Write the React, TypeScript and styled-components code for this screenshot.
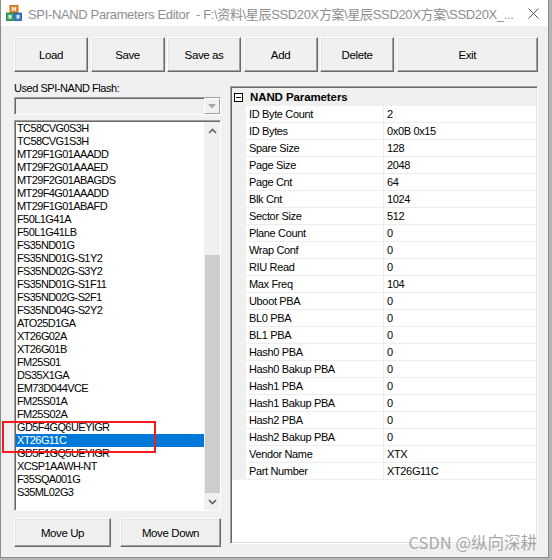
import React from "react";
import styled, { createGlobalStyle } from "styled-components";

const GlobalStyle = createGlobalStyle`
  html, body { margin: 0; padding: 0; }
  body { background: #b4b4b4; font-family: "Liberation Sans", Arial, sans-serif; }
  #root { width: 552px; height: 560px; }
`;

const Desktop = styled.div`
  position: relative;
  width: 552px;
  height: 560px;
  overflow: hidden;
  background: #b4b4b4;
`;

const Window = styled.div`
  width: 549px;
  height: 558px;
  box-sizing: border-box;
  border: 1px solid #8c8c8c;
  border-top: none;
  background: #f0f0f0;
  display: flex;
  flex-direction: column;
`;

const TitleBar = styled.div`
  height: 26px;
  flex: none;
  background: #ffffff;
  display: flex;
  align-items: center;
  padding: 0 9px 0 5px;
`;

const TitleText = styled.div`
  flex: 1;
  min-width: 0;
  margin-left: 6px;
  font-family: "Liberation Sans", "Noto Sans CJK SC", sans-serif;
  font-size: 13px;
  letter-spacing: -0.35px;
  color: #8e8e8e;
  white-space: pre;
  overflow: hidden;
`;

const Content = styled.div`
  flex: 1;
  display: flex;
  flex-direction: column;
  padding: 11px 10px 0 13px;
`;

const Toolbar = styled.div`
  display: flex;
  gap: 2.5px;
  height: 35px;
`;

const Button = styled.button<{ $w?: number }>`
  ${(p) => (p.$w ? `width: ${p.$w}px; flex: none;` : "flex: 1;")}
  height: 100%;
  box-sizing: border-box;
  margin: 0;
  padding: 0;
  background: #f0f0f0;
  border: 1px solid;
  border-color: #ffffff #696969 #696969 #ffffff;
  box-shadow: inset -1px -1px 0 #a0a0a0, inset 1px 1px 0 #e3e3e3;
  font-family: "Liberation Sans", Arial, sans-serif;
  font-size: 11.5px;
  letter-spacing: -0.4px;
  color: #000;
`;

const Body = styled.div`
  display: flex;
  gap: 9px;
  margin-top: 9px;
`;

const LeftColumn = styled.div`
  width: 207px;
  flex: none;
  display: flex;
  flex-direction: column;
`;

const Label = styled.div`
  height: 14px;
  line-height: 14px;
  font-size: 11px;
  letter-spacing: -0.45px;
  color: #000;
`;

const Combo = styled.div`
  margin-top: 2px;
  height: 18px;
  box-sizing: border-box;
  border: 1px solid;
  border-color: #a0a0a0 #ffffff #ffffff #a0a0a0;
  box-shadow: inset 1px 1px 0 #696969;
  background: #f0f0f0;
  display: flex;
  justify-content: flex-end;
`;

const ComboArrow = styled.div`
  width: 16px;
  box-sizing: border-box;
  border: 1px solid;
  border-color: #ffffff #a0a0a0 #a0a0a0 #ffffff;
  display: flex;
  align-items: center;
  justify-content: center;
`;

const ListBox = styled.div`
  margin-top: 5px;
  height: 391px;
  box-sizing: border-box;
  border-style: solid;
  border-width: 1px;
  border-color: #a0a0a0 #ffffff #ffffff #a0a0a0;
  box-shadow: inset 1px 1px 0 #696969;
  padding: 1px 0 0 1px;
  background: #ffffff;
  display: flex;
`;

const Items = styled.div`
  flex: 1;
  display: flex;
  flex-direction: column;
`;

const Item = styled.div<{ $selected?: boolean }>`
  height: 13px;
  line-height: 13px;
  padding-left: 1px;
  font-size: 11px;
  letter-spacing: -0.6px;
  white-space: nowrap;
  color: ${(p) => (p.$selected ? "#ffffff" : "#000000")};
  background: ${(p) => (p.$selected ? "#0078d7" : "transparent")};
`;

const ScrollBar = styled.div`
  width: 16px;
  flex: none;
  display: flex;
  flex-direction: column;
  background: #f0f0f0;
`;

const ScrollArrow = styled.div`
  height: 17px;
  display: flex;
  align-items: center;
  justify-content: center;
`;

const ScrollTrack = styled.div`
  flex: 1;
  display: flex;
  flex-direction: column;
  justify-content: flex-end;
  align-items: center;
`;

const Thumb = styled.div`
  width: 15px;
  height: 238px;
  background: #cdcdcd;
`;

const BottomButtons = styled.div`
  margin-top: 7px;
  height: 29px;
  display: flex;
  gap: 9px;
`;

const Panel = styled.div`
  flex: 1;
  margin-top: 5px;
  height: 458px;
  box-sizing: border-box;
  border: 1px solid;
  border-color: #a0a0a0 #ffffff #ffffff #a0a0a0;
  box-shadow: inset 1px 1px 0 #696969, inset -1px -1px 0 #e3e3e3;
  padding: 1px 1px 1px 1px;
  background: #ffffff;
  display: flex;
  flex-direction: column;
`;

const Header = styled.div`
  height: 18px;
  flex: none;
  background: #f0f0f0;
  display: flex;
  align-items: center;
  padding-left: 2px;
`;

const MinusBox = styled.div`
  width: 9px;
  height: 9px;
  box-sizing: border-box;
  border: 1px solid #000;
  background: #fff;
  display: flex;
  align-items: center;
  justify-content: center;
  &::after {
    content: "";
    width: 5px;
    height: 1px;
    background: #000;
  }
`;

const HeaderText = styled.div`
  margin-left: 7px;
  font-size: 11.5px;
  font-weight: bold;
  letter-spacing: -0.1px;
  color: #000;
`;

const Row = styled.div`
  display: grid;
  grid-template-columns: 14px 138px 1fr;
  height: 17px;
  flex: none;
`;

const Margin = styled.div`
  background: #f0f0f0;
`;

const Cell = styled.div<{ $name?: boolean }>`
  box-sizing: border-box;
  border-bottom: 1px solid #ededed;
  ${(p) => (p.$name ? "border-right: 1px solid #ededed;" : "")}
  padding-left: 3px;
  line-height: 16px;
  font-size: 11px;
  letter-spacing: -0.35px;
  color: #000;
  white-space: nowrap;
  overflow: hidden;
`;

const Watermark = styled.div`
  position: absolute;
  right: 15px;
  top: 531px;
  font-family: "Noto Sans CJK SC", "Liberation Sans", sans-serif;
  font-size: 16.5px;
  line-height: 22px;
  color: rgba(140, 140, 140, 0.75);
  white-space: nowrap;
`;

const RedBox = styled.div`
  position: absolute;
  left: 2px;
  top: 421px;
  width: 154px;
  height: 32px;
  box-sizing: border-box;
  border: 2px solid #f21c1c;
  pointer-events: none;
`;

const AppIcon = () => (
  <svg width="16" height="16" viewBox="0 0 16 16">
    <rect x="4" y="0.5" width="8" height="7" fill="#f08c2c" stroke="#b85c10" strokeWidth="0.8" />
    <rect x="6" y="2" width="1.2" height="4" fill="#fff" />
    <rect x="8.8" y="2" width="1.2" height="4" fill="#fff" />
    <rect x="6" y="3.5" width="4" height="1" fill="#fff" />
    <rect x="0.5" y="8" width="7" height="7.5" fill="#39a86a" stroke="#23744a" strokeWidth="0.8" />
    <rect x="8.5" y="8" width="7" height="7.5" fill="#3b7fd4" stroke="#23508e" strokeWidth="0.8" />
    <rect x="2.5" y="10" width="3" height="3.5" fill="#d8f0e0" />
    <rect x="10.5" y="10" width="3" height="3.5" fill="#d8e6f8" />
  </svg>
);

const CloseIcon = () => (
  <svg width="11" height="11" viewBox="0 0 11 11">
    <path d="M0.5 0.5 L10.5 10.5 M10.5 0.5 L0.5 10.5" stroke="#555" strokeWidth="1" fill="none" />
  </svg>
);

const ChevronUp = () => (
  <svg width="9" height="6" viewBox="0 0 9 6">
    <polyline points="1,5 4.5,1.5 8,5" stroke="#606060" strokeWidth="1.6" fill="none" />
  </svg>
);

const ChevronDown = () => (
  <svg width="9" height="6" viewBox="0 0 9 6">
    <polyline points="1,1 4.5,4.5 8,1" stroke="#606060" strokeWidth="1.6" fill="none" />
  </svg>
);

const ComboTriangle = () => (
  <svg width="8" height="5" viewBox="0 0 8 5">
    <polygon points="0,0 8,0 4,4.5" fill="#a6a6a6" />
  </svg>
);

const TITLE = "SPI-NAND Parameters Editor  - F:\\资料\\星辰SSD20X方案\\星辰SSD20X方案\\SSD20X_...";

const FLASH = [
  "TC58CVG0S3H",
  "TC58CVG1S3H",
  "MT29F1G01AAADD",
  "MT29F2G01AAAED",
  "MT29F2G01ABAGDS",
  "MT29F4G01AAADD",
  "MT29F1G01ABAFD",
  "F50L1G41A",
  "F50L1G41LB",
  "FS35ND01G",
  "FS35ND01G-S1Y2",
  "FS35ND02G-S3Y2",
  "FS35ND01G-S1F11",
  "FS35ND02G-S2F1",
  "FS35ND04G-S2Y2",
  "ATO25D1GA",
  "XT26G02A",
  "XT26G01B",
  "FM25S01",
  "DS35X1GA",
  "EM73D044VCE",
  "FM25S01A",
  "FM25S02A",
  "GD5F4GQ6UEYIGR",
  "XT26G11C",
  "GD5F1GQ5UEYIGR",
  "XCSP1AAWH-NT",
  "F35SQA001G",
  "S35ML02G3",
];

const PARAMS: [string, string][] = [
  ["ID Byte Count", "2"],
  ["ID Bytes", "0x0B 0x15"],
  ["Spare Size", "128"],
  ["Page Size", "2048"],
  ["Page Cnt", "64"],
  ["Blk Cnt", "1024"],
  ["Sector Size", "512"],
  ["Plane Count", "0"],
  ["Wrap Conf", "0"],
  ["RIU Read", "0"],
  ["Max Freq", "104"],
  ["Uboot PBA", "0"],
  ["BL0 PBA", "0"],
  ["BL1 PBA", "0"],
  ["Hash0 PBA", "0"],
  ["Hash0 Bakup PBA", "0"],
  ["Hash1 PBA", "0"],
  ["Hash1 Bakup PBA", "0"],
  ["Hash2 PBA", "0"],
  ["Hash2 Bakup PBA", "0"],
  ["Vendor Name", "XTX"],
  ["Part Number", "XT26G11C"],
];

export default function App() {
  return (
    <Desktop>
      <GlobalStyle />
      <Window>
        <TitleBar>
          <AppIcon />
          <TitleText>{TITLE}</TitleText>
          <CloseIcon />
        </TitleBar>
        <Content>
          <Toolbar>
            <Button $w={74}>Load</Button>
            <Button $w={74}>Save</Button>
            <Button $w={74}>Save as</Button>
            <Button $w={74}>Add</Button>
            <Button $w={74}>Delete</Button>
            <Button>Exit</Button>
          </Toolbar>
          <Body>
            <LeftColumn>
              <Label>Used SPI-NAND Flash:</Label>
              <Combo>
                <ComboArrow>
                  <ComboTriangle />
                </ComboArrow>
              </Combo>
              <ListBox>
                <Items>
                  {FLASH.map((f) => (
                    <Item key={f} $selected={f === "XT26G11C"}>
                      {f}
                    </Item>
                  ))}
                </Items>
                <ScrollBar>
                  <ScrollArrow>
                    <ChevronUp />
                  </ScrollArrow>
                  <ScrollTrack>
                    <Thumb />
                  </ScrollTrack>
                  <ScrollArrow>
                    <ChevronDown />
                  </ScrollArrow>
                </ScrollBar>
              </ListBox>
              <BottomButtons>
                <Button $w={97}>Move Up</Button>
                <Button>Move Down</Button>
              </BottomButtons>
            </LeftColumn>
            <Panel>
              <Header>
                <MinusBox />
                <HeaderText>NAND Parameters</HeaderText>
              </Header>
              {PARAMS.map(([n, v]) => (
                <Row key={n}>
                  <Margin />
                  <Cell $name>{n}</Cell>
                  <Cell>{v}</Cell>
                </Row>
              ))}
            </Panel>
          </Body>
        </Content>
      </Window>
      <RedBox />
      <Watermark>CSDN @纵向深耕</Watermark>
    </Desktop>
  );
}
